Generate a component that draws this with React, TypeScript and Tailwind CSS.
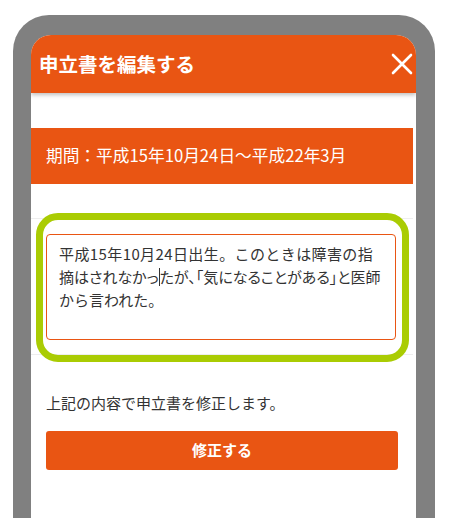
export default function App() {
  return (
    <div
      className="h-[518px] overflow-hidden bg-white pl-[13px] pt-[15px]"
      style={{ fontFamily: '"Noto Sans CJK JP", "Noto Sans", sans-serif' }}
    >
      <div className="h-[600px] w-[422px] rounded-[36px] bg-[#808080] pl-[18px] pr-[19px] pt-[20px]">
        <div className="h-full overflow-hidden rounded-t-[20px] bg-white">
          {/* header */}
          <div className="relative z-10 flex h-[58px] items-center justify-between bg-[#e95513] pl-[8px] pr-[3px] shadow-[0_2px_4px_rgba(0,0,0,0.25)]">
            <h1 className="text-[19.5px] font-bold text-white">申立書を編集する</h1>
            <button type="button" className="flex h-[22px] w-[22px] items-center justify-center">
              <svg width="22" height="22" viewBox="0 0 22 22">
                <path d="M2 2 L20 20 M20 2 L2 20" stroke="white" strokeWidth="2.6" strokeLinecap="round" />
              </svg>
            </button>
          </div>

          <div className="mr-[3px]">
            <div className="mt-[35px] flex h-[56px] items-center bg-[#e95513] pl-[15px] text-[16.7px] text-white">
              期間：平成15年10月24日〜平成22年3月
            </div>

            <div className="relative mt-[34px] border-y border-[#eeeeee] pb-[14px] pl-[15px] pr-[17px] pt-[15px]">
              <div className="pointer-events-none absolute -bottom-[8px] left-[5px] right-[4px] -top-[6px] rounded-[22px] border-[7px] border-[#aacc03]" />
              <div className="relative h-[106px] rounded-[4px] border-[1.5px] border-[#e95513] bg-white pl-[12px] pr-[8px] pt-[7px] text-[15px] leading-[23px] text-[#333]">
                <span className="tracking-[0.4px]">平成15年10月24日出生。このときは障害の指</span>
                <br />
                <span className="[font-feature-settings:'palt']">
                  摘はされなかっ
                  <span className="inline-block h-[18px] w-0 border-l border-[#333] align-[-3px]" />
                  たが、「気になることがある」と医師
                </span>
                <br />
                から言われた。
              </div>
            </div>

            <div className="px-[15px]">
              <p className="mt-[37px] text-[15px] leading-[22px] text-[#333]">上記の内容で申立書を修正します。</p>
              <button
                type="button"
                className="mt-[17px] flex h-[39px] w-[352px] items-center justify-center rounded-[3px] bg-[#e95513] text-[15px] font-bold text-white"
              >
                修正する
              </button>
            </div>
          </div>
        </div>
      </div>
    </div>
  );
}
